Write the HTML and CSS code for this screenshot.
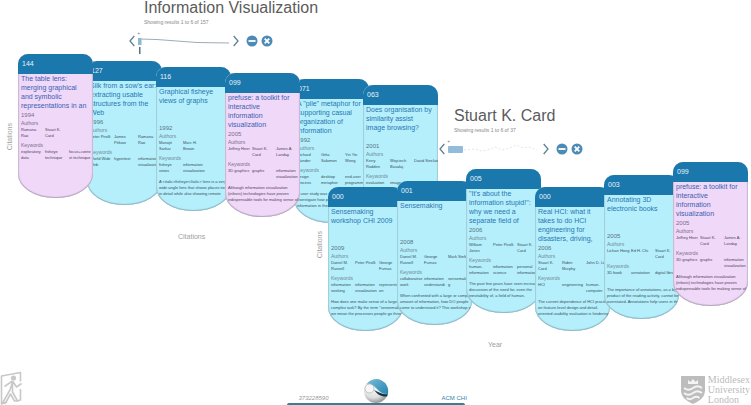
FILE: index.html
```html
<!DOCTYPE html>
<html lang="en">
<head>
<meta charset="utf-8">
<title>Publication explorer</title>
<link rel="stylesheet" href="styles.css">
</head>
<body>
<svg class="defs" aria-hidden="true">
  <symbol id="prev" viewBox="0 0 6 12"><path d="M5.300 1 1 6l4.300 5" fill="none" stroke="#5f8293" stroke-width="1.300"/></symbol>
  <symbol id="next" viewBox="0 0 6 12"><path d="M.7 1 5 6 .7 11" fill="none" stroke="#5f8293" stroke-width="1.300"/></symbol>
  <symbol id="minus" viewBox="0 0 12 12"><circle cx="6" cy="6" r="5.500" fill="#4c8bb5"/><path d="M2.500 6h7" stroke="#fff" stroke-width="1.800"/></symbol>
  <symbol id="close" viewBox="0 0 12 12"><circle cx="6" cy="6" r="5.500" fill="#4c8bb5"/><path d="m3.700 3.700 4.600 4.600m0-4.600L3.700 8.300" stroke="#fff" stroke-width="1.800"/></symbol>
</svg>
<main class="canvas">
  <section class="group group-topic">
    <header class="group-head">
      <h1>Information Visualization</h1>
      <p>Showing results 1 to 6 of 157</p>
      <div class="controls">
        <button type="button" aria-label="Previous"><svg class="chevron"><use href="#prev"/></svg></button>
        <svg class="spark" viewBox="0 0 96 24">
          <path d="M2 10 20 10.500 60 13.500 92 14" fill="none" stroke="#87959e" stroke-width=".8"/>
          <path d="M.5 4.500h2.500M1.700 3.500v2" stroke="#9aa7b0" stroke-width=".8"/>
          <rect x="1" y="9" width="3.500" height="7" fill="#8bbad0"/>
          <rect x="2" y="18" width="1.500" height="7" fill="#56707e"/>
        </svg>
        <button type="button" aria-label="Next"><svg class="chevron"><use href="#next"/></svg></button>
        <button type="button" class="round" aria-label="Minimise"><svg class="dot"><use href="#minus"/></svg></button>
        <button type="button" class="round" aria-label="Close"><svg class="dot"><use href="#close"/></svg></button>
      </div>
    </header>
    <span class="axis-y">Citations</span>
    <div class="cards">
      <article class="card pink step-0 front">
        <div class="count">144</div>
        <h2>The table lens:<br>merging graphical<br>and symbolic<br>representations in an</h2>
        <div class="year">1994</div>
        <h3>Authors</h3>
        <div class="cols"><span>Ramana<br>Rao</span><span>Stuart K.<br>Card</span></div>
        <h3>Keywords</h3>
        <div class="cols"><span>exploratory<br>data</span><span>fisheye<br>technique</span><span>focus+conte<br>xt technique</span></div>
      </article>
      <article class="card step-1">
        <div class="count">127</div>
        <h2>Silk from a sow's ear:<br>extracting usable<br>structures from the<br>Web</h2>
        <div class="year">1996</div>
        <h3>Authors</h3>
        <div class="cols"><span>Peter Pirolli</span><span>James<br>Pitkow</span><span>Ramana<br>Rao</span></div>
        <h3>Keywords</h3>
        <div class="cols"><span>World Wide<br>Web</span><span>hypertext</span><span>information<br>visualization</span></div>
      </article>
      <article class="card step-2 front">
        <div class="count">116</div>
        <h2>Graphical fisheye<br>views of graphs</h2>
        <div class="year">1992</div>
        <h3>Authors</h3>
        <div class="cols"><span>Manojit<br>Sarkar</span><span>Marc H.<br>Brown</span></div>
        <h3>Keywords</h3>
        <div class="cols"><span>fisheye<br>views</span><span>information<br>visualization</span></div>
        <p>A &lt;italic&gt;fisheye&lt;/italic&gt; lens is a very<br>wide angle lens that shows places nearby<br>in detail while also showing remote</p>
      </article>
      <article class="card pink step-3 front">
        <div class="count">099</div>
        <h2>prefuse: a toolkit for<br>interactive<br>information<br>visualization</h2>
        <div class="year">2005</div>
        <h3>Authors</h3>
        <div class="cols"><span>Jeffrey Heer</span><span>Stuart K.<br>Card</span><span>James A.<br>Landay</span></div>
        <h3>Keywords</h3>
        <div class="cols"><span>3D graphics</span><span>graphs</span><span>information<br>visualization</span></div>
        <p>Although information visualization<br>(infovis) technologies have proven<br>indispensable tools for making sense of</p>
      </article>
      <article class="card step-4">
        <div class="count">071</div>
        <h2>A "pile" metaphor for<br>supporting casual<br>organization of<br>information</h2>
        <div class="year">1992</div>
        <h3>Authors</h3>
        <div class="cols"><span>Richard<br>Mander</span><span>Gitta<br>Salomon</span><span>Yin Yin<br>Wong</span></div>
        <h3>Keywords</h3>
        <div class="cols"><span>design<br>process</span><span>desktop<br>metaphor</span><span>end-user<br>programming</span></div>
        <p>A user study was conducted to<br>investigate how people deal with<br>information in their workspaces</p>
      </article>
      <article class="card step-5 front">
        <div class="count">063</div>
        <h2>Does organisation by<br>similarity assist<br>image browsing?</h2>
        <div class="year">2001</div>
        <h3>Authors</h3>
        <div class="cols"><span>Kerry<br>Rodden</span><span>Wojciech<br>Basalaj</span><span>David Sinclair</span></div>
        <h3>Keywords</h3>
        <div class="cols"><span>evaluation</span><span>image</span></div>
      </article>
    </div>
    <span class="axis-x">Citations</span>
  </section>

  <section class="group group-author">
    <header class="group-head">
      <h1>Stuart K. Card</h1>
      <p>Showing results 1 to 6 of 37</p>
      <div class="controls">
        <button type="button" aria-label="Previous"><svg class="chevron"><use href="#prev"/></svg></button>
        <svg class="spark" viewBox="0 0 96 24">
          <path d="M.5 4.500h2.500M1.700 3.500v2" stroke="#9aa7b0" stroke-width=".8"/>
          <rect x="1" y="9" width="15" height="7" rx="1" fill="#93bcdb"/>
          <path d="M17 13l10-1 8 2 9-2 4-2 7 3 8-2 6-3 8 3 5-1 8 3" fill="none" stroke="#d7e0e4" stroke-width=".8" stroke-dasharray="2 2"/>
        </svg>
        <button type="button" aria-label="Next"><svg class="chevron"><use href="#next"/></svg></button>
        <button type="button" class="round" aria-label="Minimise"><svg class="dot"><use href="#minus"/></svg></button>
        <button type="button" class="round" aria-label="Close"><svg class="dot"><use href="#close"/></svg></button>
      </div>
    </header>
    <span class="axis-y">Citations</span>
    <div class="cards">
      <article class="card step-4">
        <div class="count">000</div>
        <h2>Sensemaking<br>workshop CHI 2009</h2>
        <div class="year">2009</div>
        <h3>Authors</h3>
        <div class="cols"><span>Daniel M.<br>Russell</span><span>Peter Pirolli</span><span>George<br>Furnas</span></div>
        <h3>Keywords</h3>
        <div class="cols"><span>information<br>seeking</span><span>information<br>visualization</span><span>representati<br>on</span></div>
        <p>How does one make sense of a large or<br>complex task? By the term "sensemaking"<br>we mean the processes people go through</p>
      </article>
      <article class="card step-3">
        <div class="count">001</div>
        <h2>Sensemaking</h2>
        <div class="year">2008</div>
        <h3>Authors</h3>
        <div class="cols"><span>Daniel M.<br>Russell</span><span>George<br>Furnas</span><span>Mark Stefik</span></div>
        <h3>Keywords</h3>
        <div class="cols"><span>collaborative<br>work</span><span>information<br>understandi</span><span>sensemakin<br>g</span></div>
        <p>When confronted with a large or complex<br>amount of information, how DO people<br>come to understand it? This workshop will</p>
      </article>
      <article class="card step-1">
        <div class="count">005</div>
        <h2>"It's about the<br>information stupid!":<br>why we need a<br>separate field of</h2>
        <div class="year">2006</div>
        <h3>Authors</h3>
        <div class="cols"><span>William<br>Jones</span><span>Peter Pirolli</span><span>Stuart K.<br>Card</span></div>
        <h3>Keywords</h3>
        <div class="cols"><span>human-<br>information</span><span>information<br>science</span><span>personal<br>information</span></div>
        <p>The past few years have seen increasing<br>discussion of the need for, even the<br>inevitability of, a field of human-</p>
      </article>
      <article class="card step-4">
        <div class="count">000</div>
        <h2>Real HCI: what it<br>takes to do HCI<br>engineering for<br>disasters, driving,</h2>
        <div class="year">2006</div>
        <h3>Authors</h3>
        <div class="cols"><span>Stuart K.<br>Card</span><span>Robin<br>Murphy</span><span>John D. Lee</span></div>
        <h3>Keywords</h3>
        <div class="cols"><span>HCI</span><span>engineering</span><span>human-<br>computer</span></div>
        <p>The current dependence of HCI practice<br>on feature-level design and detail-<br>oriented usability evaluation is hindering</p>
      </article>
      <article class="card step-2">
        <div class="count">003</div>
        <h2>Annotating 3D<br>electronic books</h2>
        <div class="year">2005</div>
        <h3>Authors</h3>
        <div class="cols"><span>Lichan Hong</span><span>Ed H. Chi</span><span>Stuart K.<br>Card</span></div>
        <h3>Keywords</h3>
        <div class="cols"><span>3D book</span><span>annotation</span><span>digital library</span></div>
        <p>The importance of annotations, as a by-<br>product of the reading activity, cannot be<br>overstated. Annotations help users in the</p>
      </article>
      <article class="card pink step-0">
        <div class="count">099</div>
        <h2>prefuse: a toolkit for<br>interactive<br>information<br>visualization</h2>
        <div class="year">2005</div>
        <h3>Authors</h3>
        <div class="cols"><span>Jeffrey Heer</span><span>Stuart K.<br>Card</span><span>James A.<br>Landay</span></div>
        <h3>Keywords</h3>
        <div class="cols"><span>3D graphics</span><span>graphs</span><span>information<br>visualization</span></div>
        <p>Although information visualization<br>(infovis) technologies have proven<br>indispensable tools for making sense of</p>
      </article>
    </div>
    <span class="axis-x">Year</span>
  </section>
</main>

<footer class="dock">
  <button type="button" class="exit" aria-label="Exit">
    <svg viewBox="0 0 24 34">
      <g fill="none" stroke="#c8c8c8" stroke-width="1.600" stroke-linejoin="round">
        <path d="M7 31 1.500 33V5L20.500 1.500v9M20.500 18v11L17 30"/>
        <path d="M12.500 10 4.500 15.500M12.500 10l4 6 5-3.500M12.500 11v10l5 9h-3l-4-7-5 9h-3l7.500-13z"/>
      </g>
      <circle cx="13.500" cy="7" r="2.600" fill="#c8c8c8"/>
    </svg>
  </button>
  <div class="dock-center">
    <div class="dock-row">
      <span class="code">373228590</span>
      <svg class="ball" viewBox="0 0 26 24">
        <defs>
          <radialGradient id="pearl" cx=".4" cy=".3" r=".8"><stop offset="0" stop-color="#fff"/><stop offset=".6" stop-color="#dedede"/><stop offset="1" stop-color="#777"/></radialGradient>
          <linearGradient id="sky" x2="1" y2="1"><stop offset="0" stop-color="#79bcd8"/><stop offset="1" stop-color="#2485b1"/></linearGradient>
        </defs>
        <circle cx="13" cy="12" r="12" fill="url(#pearl)"/>
        <path d="M3.500 5A12 12 0 0 1 24.800 15C19 15 16 12 13 9 10 6 7 4 3.500 5z" fill="url(#sky)"/>
        <path d="M11 11c5 2 8 5 13.800 4l-.7 2.500C18 18 14 15 11 11z" fill="#143848"/>
        <circle cx="6.500" cy="9.500" r="4.500" fill="#f7f7f7" stroke="#aeb8bc" stroke-width=".8"/>
      </svg>
      <a href="#acm-chi" class="venue">ACM CHI</a>
    </div>
    <div class="dock-bar"></div>
  </div>
  <div class="brand">
    <svg class="shield" viewBox="0 0 24 28">
      <path d="M0 0h24v14c0 7-5 11-12 14C5 25 0 21 0 14z" fill="#bdbdbd"/>
      <path d="M7 8V4l2.500 2L12 3l2.500 3L17 4v4z" fill="#f4f4f4"/>
      <path d="M3 12q4.500 3.500 9 0t9 0M3 17q4.500 3.500 9 0t9 0M5.500 22q3.200 2.500 6.500 0t6.500 0" fill="none" stroke="#f4f4f4" stroke-width="1.800"/>
    </svg>
    <div class="brand-name">Middlesex<br>University<br>London</div>
  </div>
</footer>
</body>
</html>
```
FILE: styles.css
```css
* { box-sizing: border-box; }

body {
  margin: 0;
  min-height: 100vh;
  display: flex;
  flex-direction: column;
  overflow: hidden;
  background: #fff;
  color: #666;
  font-family: "Liberation Sans", Arial, sans-serif;
}

h1, h2, h3, p { margin: 0; font-weight: 400; }

button {
  display: flex;
  padding: 0;
  border: 0;
  background: none;
  cursor: pointer;
}

.defs { position: absolute; width: 0; height: 0; }

/* Free canvas that holds the result groups */
.canvas { position: relative; flex: 1; }

.group { position: absolute; isolation: isolate; }
.group-topic { left: 18px; top: 0; }
.group-author { left: 328px; top: 108px; }

.group-head { height: 54px; padding-left: 126px; }
.group-head h1 { font-size: 16px; line-height: 16px; color: #5c5c5c; white-space: nowrap; }
.group-head p { margin-top: 2px; font-size: 5px; line-height: 8px; color: #888; }

.controls {
  display: flex;
  align-items: center;
  height: 24px;
  margin: 3px 0 0 -15px;
}
.chevron { width: 6px; height: 12px; }
.spark { width: 96px; height: 24px; margin-left: 2px; overflow: visible; }
.round { margin-left: 3px; }
.controls .round:nth-of-type(3) { margin-left: 7px; }
.dot { width: 12px; height: 12px; }

.axis-y, .axis-x { font-size: 7px; line-height: 8px; color: #a0a0a0; }
.axis-y {
  position: absolute;
  left: -12px;
  top: 123px;
  writing-mode: vertical-rl;
  transform: rotate(180deg);
}
.axis-x { display: block; margin-top: 4px; padding-left: 160px; }

.cards { display: flex; align-items: flex-start; min-height: 175px; }

.card {
  position: relative;
  flex: none;
  width: 75px;
  height: 144px;
  margin-right: -6px;
  overflow: hidden;
  border-radius: 10px 10px 37px 37px / 10px 10px 24px 24px;
  background: #b5effc;
  box-shadow: inset 0 -1px 1px #8fb4c0, inset 1px 0 1px #a3cfdb, inset -1px 0 1px #a3cfdb;
  white-space: nowrap;
}
.pink {
  background: #efd8f8;
  box-shadow: inset 0 -1px 1px #b5a5bd, inset 1px 0 1px #ccbad4, inset -1px 0 1px #ccbad4;
}
.front { z-index: 1; }
.step-1 { margin-top: 7px; }
.step-2 { margin-top: 13px; }
.step-3 { margin-top: 19px; }
.step-4 { margin-top: 25px; }
.step-5 { margin-top: 31px; }

.count {
  height: 20px;
  padding-left: 4px;
  background: #1b78ad;
  color: #e4f3fb;
  font-size: 7px;
  line-height: 20px;
}
.card h2 { height: 37px; padding-left: 3px; font-size: 7px; line-height: 9px; color: #2a76b2; }
.pink h2 { color: #3a62b0; }
.year { padding-left: 3px; font-size: 6px; line-height: 9px; color: #59747e; }
.card h3 { padding-left: 3px; font-size: 5px; line-height: 7px; color: #708a94; }
.cols {
  display: grid;
  grid-template-columns: repeat(3, 24px);
  height: 15px;
  padding-left: 3px;
  font-size: 4px;
  line-height: 6px;
  color: #35505a;
}
.card p { margin-top: 2px; padding-left: 3px; font-size: 4px; line-height: 6px; color: #35505a; }
.pink .year, .pink h3 { color: #7d6e8c; }
.pink .cols, .pink p { color: #51435c; }

.dock {
  display: grid;
  grid-template-columns: 1fr auto 1fr;
  align-items: end;
  height: 35px;
}
.exit svg { width: 24px; height: 34px; }
.dock-center { width: 178px; }
.dock-row {
  display: grid;
  grid-template-columns: minmax(0, 1fr) auto minmax(0, 1fr);
  align-items: end;
  height: 24px;
}
.code { padding-left: 12px; font-size: 6px; font-style: italic; line-height: 9px; color: #999; }
.ball { width: 26px; height: 24px; }
.venue { padding-left: 53px; font-size: 6px; line-height: 9px; color: #2f7fa8; text-decoration: none; white-space: nowrap; }
.dock-bar { height: 2px; border-radius: 6px 6px 0 0; background: #397f91; }

.brand {
  display: flex;
  justify-content: flex-end;
  align-items: center;
  gap: 3px;
  padding-right: 1px;
}
.shield { width: 24px; height: 28px; }
.brand-name { font-family: "Liberation Serif", serif; font-size: 10px; line-height: 10px; color: #bbb; }
```
